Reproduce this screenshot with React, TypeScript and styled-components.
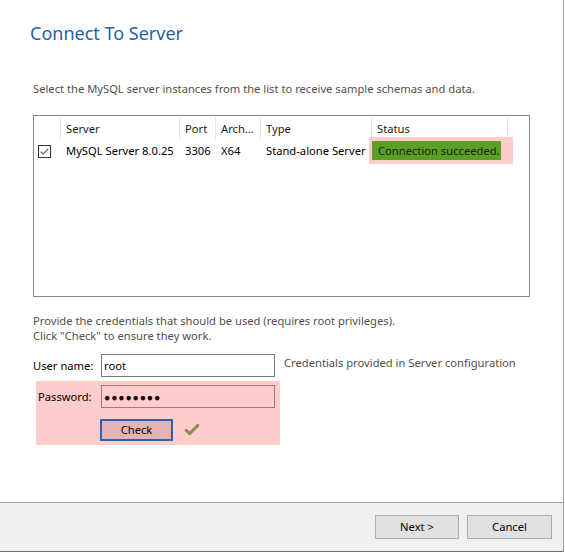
import * as React from "react";
import styled, { createGlobalStyle } from "styled-components";

const GlobalStyle = createGlobalStyle`
  html, body {
    margin: 0;
    padding: 0;
    background: #ffffff;
  }
  body {
    font-family: "Noto Sans", "Open Sans", sans-serif;
    font-size: 11.2px;
    color: #000000;
  }
`;

const columns = "27px 119px 36px 45px 111px 136px 1fr";

export default function App() {
  return (
    <>
      <GlobalStyle />
      <Window>
        <Content>
          <Title>Connect To Server</Title>
          <Description>
            Select the MySQL server instances from the list to receive sample schemas and data.
          </Description>

          <ServerList>
            <HeaderRow>
              <HeaderCell />
              <HeaderCell>Server</HeaderCell>
              <HeaderCell>Port</HeaderCell>
              <HeaderCell>Arch...</HeaderCell>
              <HeaderCell>Type</HeaderCell>
              <HeaderCell>Status</HeaderCell>
              <HeaderCell $last />
            </HeaderRow>
            <DataRow>
              <CheckCell>
                <CheckBox />
              </CheckCell>
              <Cell>MySQL Server 8.0.25</Cell>
              <Cell>3306</Cell>
              <Cell>X64</Cell>
              <Cell>Stand-alone Server</Cell>
              <Cell>
                <StatusHighlight>
                  <StatusBadge>Connection succeeded.</StatusBadge>
                </StatusHighlight>
              </Cell>
              <Cell />
            </DataRow>
          </ServerList>

          <Instructions>
            Provide the credentials that should be used (requires root privileges).
            <br />
            Click "Check" to ensure they work.
          </Instructions>

          <FormRow>
            <Label $width={68}>User name:</Label>
            <Field>root</Field>
            <Hint>Credentials provided in Server configuration</Hint>
          </FormRow>

          <HighlightPanel>
            <FormRow>
              <Label $width={63}>Password:</Label>
              <Field $highlighted>
                <Dots>●●●●●●●●</Dots>
              </Field>
            </FormRow>
            <ButtonRow>
              <CheckButton>Check</CheckButton>
              <CheckMark />
            </ButtonRow>
          </HighlightPanel>
        </Content>

        <Footer>
          <FooterButton $width={84}>Next &gt;</FooterButton>
          <FooterButton $width={85}>Cancel</FooterButton>
        </Footer>
      </Window>
    </>
  );
}

const CheckBox = () => (
  <svg width="13" height="13" viewBox="0 0 13 13">
    <rect x="0.5" y="0.5" width="12" height="12" fill="#ffffff" stroke="#333333" />
    <path d="M2.8 6.6 L5.2 9 L10.2 3.6" fill="none" stroke="#555555" strokeWidth="1.1" />
  </svg>
);

const CheckMark = () => (
  <CheckIcon width="16" height="13" viewBox="0 0 16 13">
    <path
      d="M2.2 7.4 L5.6 10.6 L13.8 2.4"
      fill="none"
      stroke="#8e8a5c"
      strokeWidth="3"
      strokeLinecap="round"
      strokeLinejoin="round"
    />
  </CheckIcon>
);

const Window = styled.div`
  width: 564px;
  height: 552px;
  box-sizing: border-box;
  border-right: 1px solid #a0a0a0;
  display: flex;
  flex-direction: column;
  background: #ffffff;
`;

const Content = styled.div`
  height: 502px;
  box-sizing: border-box;
  padding: 19px 0 0 33px;
  display: flex;
  flex-direction: column;
  align-items: flex-start;
`;

const Title = styled.h1`
  margin: 0 0 34px -3px;
  font-size: 18px;
  line-height: 28px;
  font-weight: 400;
  color: #1e63a6;
`;

const Description = styled.p`
  margin: 0 0 19px;
  line-height: 15px;
  color: #505050;
`;

const ServerList = styled.div`
  width: 497px;
  height: 182px;
  box-sizing: border-box;
  border: 1px solid #828790;
  background: #ffffff;
`;

const HeaderRow = styled.div`
  display: grid;
  grid-template-columns: ${columns};
  height: 24px;
  box-sizing: border-box;
  padding-top: 1px;
`;

const HeaderCell = styled.div<{ $last?: boolean }>`
  display: flex;
  align-items: center;
  padding-left: 5px;
  border-right: ${(p) => (p.$last ? "none" : "1px solid #e5e5e5")};
  color: #1a1a1a;
  white-space: nowrap;
  overflow: hidden;
`;

const DataRow = styled.div`
  display: grid;
  grid-template-columns: ${columns};
  height: 21px;
`;

const Cell = styled.div`
  display: flex;
  align-items: center;
  padding-left: 5px;
  white-space: nowrap;
  color: #000000;
`;

const CheckCell = styled(Cell)`
  padding-left: 4px;
  padding-top: 2px;
`;

const StatusHighlight = styled.span`
  display: flex;
  margin: -4px -12px -4px -8px;
  padding: 4px 12px 4px 3px;
  background: #ffcccc;
`;

const StatusBadge = styled.span`
  display: flex;
  align-items: center;
  height: 19px;
  padding: 0 1px 0 6px;
  background: #5a9f26;
  color: #231c10;
`;

const Instructions = styled.p`
  margin: 16px 0 11px;
  line-height: 15px;
  color: #505050;
`;

const FormRow = styled.div`
  display: flex;
  align-items: center;
`;

const Label = styled.span<{ $width: number }>`
  width: ${(p) => p.$width}px;
  margin-top: -1px;
  color: #000000;
`;

const Field = styled.div<{ $highlighted?: boolean }>`
  width: 174px;
  height: 23px;
  box-sizing: border-box;
  display: flex;
  align-items: center;
  padding-left: 2px;
  border: 1px solid ${(p) => (p.$highlighted ? "#a27b7b" : "#7a7a7a")};
  background: ${(p) => (p.$highlighted ? "transparent" : "#ffffff")};
  color: #000000;
`;

const Dots = styled.span`
  font-size: 10.5px;
  letter-spacing: 0.8px;
  color: #1a0505;
`;

const Hint = styled.span`
  margin-left: 9px;
  margin-top: -6px;
  color: #505050;
`;

const HighlightPanel = styled.div`
  margin: 4px 0 0 3px;
  width: 244px;
  box-sizing: border-box;
  padding: 4px 0 4px 2px;
  background: #ffcccc;
`;

const ButtonRow = styled.div`
  display: flex;
  align-items: center;
  margin-top: 11px;
  padding-left: 62px;
`;

const CheckButton = styled.button`
  width: 73px;
  height: 22px;
  box-sizing: border-box;
  border: 2px solid #2c62b2;
  background: #e6b3b3;
  font-family: inherit;
  font-size: 11.2px;
  line-height: 16px;
  color: #000000;
  padding: 0 0 1px;
`;

const CheckIcon = styled.svg`
  margin-left: 11px;
  margin-top: -1px;
`;

const Footer = styled.div`
  flex: 1;
  display: flex;
  justify-content: flex-end;
  align-items: flex-start;
  gap: 8px;
  box-sizing: border-box;
  padding: 12px 11px 0 0;
  background: #f0f0f0;
  border-top: 1px solid #a0a0a0;
  border-bottom: 1px solid #6e6e6e;
`;

const FooterButton = styled.button<{ $width: number }>`
  width: ${(p) => p.$width}px;
  height: 24px;
  box-sizing: border-box;
  border: 1px solid #adadad;
  background: #e1e1e1;
  font-family: inherit;
  font-size: 11.2px;
  line-height: 16px;
  color: #000000;
  padding: 0 0 1px;
`;
